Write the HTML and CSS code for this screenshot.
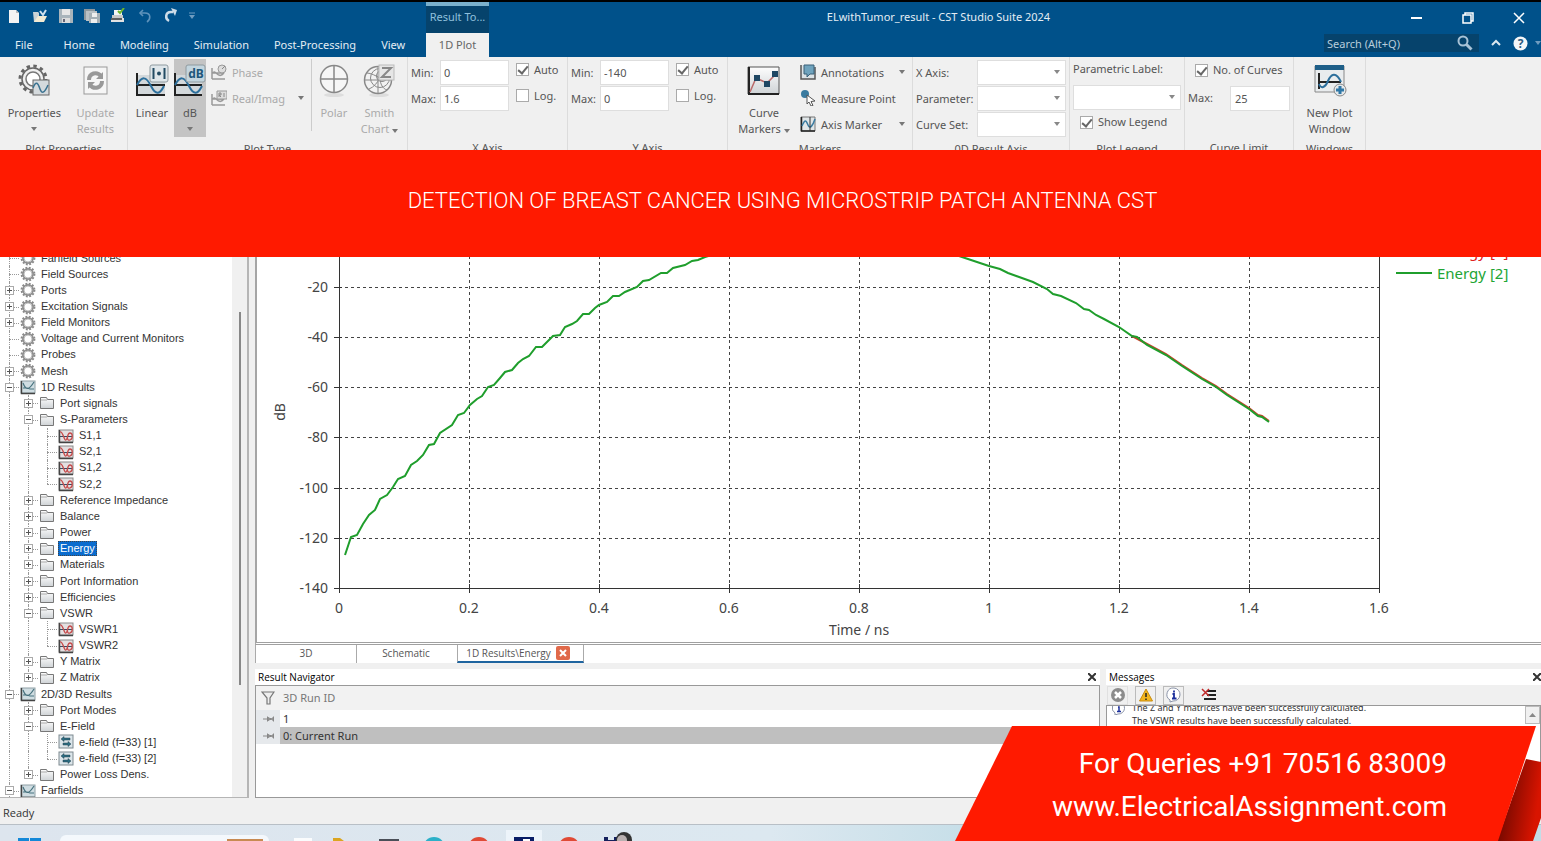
FILE: index.html
```html
<!DOCTYPE html>
<html lang="en">

<head>
  <meta charset="UTF-8">
  <meta name="viewport" content="width=device-width, initial-scale=1.0">
  <title>ELwithTumor_result - CST Studio Suite 2024</title>
  <link rel="stylesheet" href="styles.css">
</head>

<body>
  <!-- Shared icons -->
  <svg class="defs" width="0" height="0" aria-hidden="true">
    <linearGradient id="metal" x1="0" y1="0" x2="0" y2="1">
      <stop offset="0" stop-color="#fdfdfd"/>
      <stop offset="1" stop-color="#cfd3d6"/>
    </linearGradient>
    <symbol id="gear" viewBox="0 0 16 16">
      <circle cx="8" cy="8" r="6.4" fill="none" stroke="#8a8a8a" stroke-width="2" stroke-dasharray="1.9 1.45"/>
      <circle cx="8" cy="8" r="5" fill="#fff" stroke="#8f8f8f" stroke-width="2"/>
      <circle cx="8" cy="8" r="4" fill="#fff" stroke="#bdbdbd" stroke-width="1"/>
    </symbol>
    <symbol id="folder" viewBox="0 0 16 16">
      <path d="M1.500 13.500v-11h6l1 2h6v9z" fill="url(#metal)" stroke="#777"/>
      <path d="M2 5h6" stroke="#aaa"/>
    </symbol>
    <symbol id="graph" viewBox="0 0 16 16">
      <rect x="1" y="2" width="14" height="12" fill="#cfdde2" stroke="#8fa0a6"/>
      <path d="M1.500 2v12.500H15" fill="none" stroke="#444" stroke-width="1.400"/>
      <path d="M3 4c3 8 6 7 11-1M3 9h4l3 1h4" fill="none" stroke="#47727e" stroke-width="1.200"/>
    </symbol>
    <symbol id="curve" viewBox="0 0 16 16">
      <rect x="1" y="2" width="14" height="12" fill="#e3dfe0" stroke="#8b8b8b"/>
      <path d="M1.500 2v12.500H15" fill="none" stroke="#444" stroke-width="1.400"/>
      <path d="M2 8.500h12" stroke="#354b62"/>
      <path d="M2 4c3-1 4 9 6 8s1-7 4-7 3 6 0 7-3-3-2-5" fill="none" stroke="#c54b4b" stroke-width="1.300"/>
    </symbol>
    <symbol id="field" viewBox="0 0 16 16">
      <rect x="1" y="1" width="14" height="13" fill="#dbe5ea" stroke="#7e8a90"/>
      <path d="M3 5l3-2.500V4h6v2H6v1.500zM13 10l-3-2.500V9H5v2h5v1.500z" fill="#2c6d83" stroke="#24424e" stroke-width=".5"/>
    </symbol>
    <symbol id="pin" viewBox="0 0 12 8">
      <path d="M0 4h4M4.500 1.500v5M10.500 1.500v5M5 2.500l2 1h1.500l2-1v3l-2-1H7l-2 1z" fill="#999" stroke="#888"/>
    </symbol>
  </svg>

  <header class="titlebar">
    <div class="quick-access">
      <button type="button" title="New"><svg width="16" height="16"><path d="M3 2h7l3 3v10H3z" fill="#f3f3f3"/><path d="M10 2v3h3" fill="#bbb"/></svg></button>
      <button type="button" title="Open"><svg width="16" height="16"><path d="M1 4h5l1 1v9H2z" fill="#c9d2d6"/><path d="M2 14l4-6h9l-3 6z" fill="#f3ead2"/><path d="M8 3l3 4 3-5" fill="none" stroke="#cfe1ee" stroke-width="2"/></svg></button>
      <button type="button" title="Save"><svg width="16" height="16"><path d="M1 1h14v14H1z" fill="#a9b4bb"/><path d="M4 1h8v6H4z" fill="#e6e6e6"/><path d="M4 10h8v5H4z" fill="#dcdcdc"/><path d="M5 11h2v3H5z" fill="#667"/></svg></button>
      <button type="button" title="Save All"><svg width="16" height="16"><path d="M0 1h11v11H0z" fill="#8e989e"/><path d="M2 3h11v10H2z" fill="#b9c0c4"/><path d="M5 5h11v10H5z" fill="#a5afb5"/><path d="M8 5h5v4H8zM7 11h6v4H7z" fill="#eee"/></svg></button>
      <button type="button" title="Print"><svg width="16" height="16"><path d="M4 2h8v5H4z" fill="#f5f5f5"/><path d="M2 7h11v3H2z" fill="#c8c8c8"/><path d="M1 10h13v4H1z" fill="#e2e2e2"/><path d="M1 11h11" stroke="#333" stroke-width="1.500"/><path d="M8 3l2 2 4-5" fill="none" stroke="#6cb52d" stroke-width="2"/></svg></button>
      <button type="button" title="Undo"><svg width="16" height="16"><path d="M4 5h5c6 0 6 6 2 9" fill="none" stroke="#5f93bb" stroke-width="1.600"/><path d="M7 2L4 5l3 3" fill="none" stroke="#5f93bb" stroke-width="1.600"/></svg></button>
      <button type="button" title="Redo"><svg width="16" height="16"><path d="M11 4H9c-6 0-6 7-2 9" fill="none" stroke="#cddce8" stroke-width="2.500"/><path d="M9 0l6 2-2 6z" fill="#cddce8"/></svg></button>
      <button type="button" class="qa-more" title="Customize"><svg width="8" height="8"><path d="M1 1h6" stroke="#6f9cc0"/><path d="M1 3h6L4 7z" fill="#6f9cc0"/></svg></button>
    </div>
    <div class="context-title">Result To...</div>
    <div class="window-title">ELwithTumor_result - CST Studio Suite 2024</div>
    <div class="window-buttons">
      <button type="button" title="Minimize"><svg width="12" height="12"><path d="M0 6h11" stroke="#fff" stroke-width="2"/></svg></button>
      <button type="button" title="Restore"><svg width="12" height="12"><path d="M1 3h8v8H1zM3 3V1h8v8H9" fill="none" stroke="#fff" stroke-width="1.500"/></svg></button>
      <button type="button" title="Close"><svg width="12" height="12"><path d="M1 1l10 10M11 1L1 11" stroke="#fff" stroke-width="1.500"/></svg></button>
    </div>

    <nav class="tabs">
      <a class="file" href="#">File</a>
      <a href="#">Home</a>
      <a href="#">Modeling</a>
      <a href="#">Simulation</a>
      <a href="#">Post-Processing</a>
      <a href="#">View</a>
    </nav>
    <a class="tab-active" href="#">1D Plot</a>
    <div class="search-area">
      <div class="search">
        <input type="text" aria-label="Search" placeholder="Search (Alt+Q)">
        <svg width="16" height="16"><circle cx="6" cy="6" r="4.500" fill="none" stroke="#a8c2d6" stroke-width="2"/><path d="M9.500 9.500l5 5" stroke="#a8c2d6" stroke-width="3"/></svg>
      </div>
      <button type="button" title="Collapse ribbon"><svg width="10" height="8"><path d="M1 6l4-4 4 4" fill="none" stroke="#dbe7f0" stroke-width="2"/></svg></button>
      <button type="button" title="Help"><svg width="15" height="15"><circle cx="7.500" cy="7.500" r="7" fill="#f4f6f8"/><text x="7.500" y="12" class="help-mark">?</text></svg></button>
      <span class="caret"></span>
    </div>
  </header>

  <section class="ribbon">
    <div class="group g-properties">
      <div class="group-body">
        <button type="button" class="big">
          <svg width="34" height="34"><circle cx="16" cy="15" r="13" fill="none" stroke="#666" stroke-width="3" stroke-dasharray="3.400 3.400"/><circle cx="16" cy="15" r="11" fill="#f0f0f0" stroke="#666" stroke-width="1.500"/><circle cx="16" cy="15" r="7" fill="#fff" stroke="#777" stroke-width="1.500"/><rect x="16" y="16" width="16" height="15" fill="#d5dadd" stroke="#666"/><path d="M16 24c3-8 5-5 7 1s5 3 8-4" fill="none" stroke="#3b7391" stroke-width="1.500"/></svg>
          <span>Properties</span><span class="caret"></span>
        </button>
        <button type="button" class="big disabled">
          <svg width="34" height="34"><rect x="6" y="3" width="23" height="27" fill="#f6f6f6" stroke="#999"/><path d="M11 16c0-7 8-9 12-4M24 17c0 7-8 9-12 4" fill="none" stroke="#999" stroke-width="4"/><path d="M25 8v7h-7zM10 25v-7h7z" fill="#999"/></svg>
          <span>Update<br>Results</span>
        </button>
      </div>
      <div class="caption">Plot Properties</div>
    </div>

    <div class="group g-type">
      <div class="group-body">
        <button type="button" class="big">
          <svg width="34" height="34"><path d="M2 11h28v20H2z" fill="#d3d8db"/><path d="M2 9v23" stroke="#222" stroke-width="2"/><path d="M2 21h28M2 31h28" stroke="#222" stroke-width="2"/><path d="M2 21c5-9 9-9 14 1s9 8 13 0" fill="none" stroke="#2c6f9c" stroke-width="2"/><rect x="15" y="1" width="18" height="17" rx="2" fill="#dfe6ea" stroke="#8f9a9f"/><path d="M18.500 4v11M29.500 4v11" stroke="#234b63" stroke-width="2"/><circle cx="24" cy="9.500" r="2" fill="#234b63"/></svg>
          <span>Linear</span>
        </button>
        <button type="button" class="big pressed">
          <svg width="32" height="34"><path d="M1 11h27v20H1z" fill="#d3d8db"/><path d="M1 9v23" stroke="#222" stroke-width="2"/><path d="M1 21h27M1 31h27" stroke="#222" stroke-width="2"/><path d="M1 21c5-9 9-9 14 1s9 8 13 0" fill="none" stroke="#2c6f9c" stroke-width="2"/><rect x="12" y="1" width="19" height="17" rx="2" fill="#c3d5de" stroke="#8f9a9f"/><text x="22" y="14" class="db-mark">dB</text></svg>
          <span>dB</span><span class="caret"></span>
        </button>
        <div class="stack narrow">
          <button type="button" class="small disabled"><svg width="16" height="16"><path d="M1 4v11M1 9h12M1 15h13M2 9c3-4 5 7 11 0" fill="none" stroke="#999" stroke-width="1.500"/><circle cx="11" cy="5" r="4" fill="#ddd" stroke="#999"/><path d="M11 5l3-3" stroke="#888"/></svg>Phase</button>
          <button type="button" class="small disabled"><svg width="16" height="16"><path d="M1 4v11M1 9h12M1 15h13M2 9c3-4 5 7 11 0" fill="none" stroke="#999" stroke-width="1.500"/><path d="M6 1h10v8H6z" fill="#ddd" stroke="#999"/><path d="M8 7V3h2v2H8l2 2M13 3v4" fill="none" stroke="#888"/></svg>Real/Imag<span class="caret"></span></button>
        </div>
        <div class="separator"></div>
        <button type="button" class="big disabled">
          <svg width="34" height="34"><ellipse cx="17" cy="31" rx="10" ry="2" fill="#ddd"/><circle cx="17" cy="15" r="13.500" fill="#f6f6f6" stroke="#888" stroke-width="1.500"/><path d="M3 15h28M17 1v28" stroke="#888" stroke-width="1.500"/></svg>
          <span>Polar</span>
        </button>
        <button type="button" class="big disabled">
          <svg width="34" height="34"><ellipse cx="17" cy="31" rx="10" ry="2" fill="#ddd"/><circle cx="16" cy="16" r="13.500" fill="#f2f2f2" stroke="#888" stroke-width="1.500"/><circle cx="18" cy="14" r="9.500" fill="none" stroke="#888"/><circle cx="20" cy="12" r="5.500" fill="none" stroke="#888"/><path d="M3 16h26M16 3v26M18 14C14 12 9 9 5 9M18 14c-3 5-6 9-11 11M18 14c0 6 3 11 7 12" fill="none" stroke="#888"/><rect x="17" y="1" width="15" height="15" fill="#e6e6e6" stroke="#bbb"/><path d="M20 4h9l-9 9h9" fill="none" stroke="#888" stroke-width="2"/></svg>
          <span>Smith<br>Chart <i class="caret"></i></span>
        </button>
      </div>
      <div class="caption">Plot Type</div>
    </div>

    <div class="group g-axis">
      <div class="group-body fields">
        <label for="xMin">Min:</label><input type="text" id="xMin" value="0">
        <label class="check"><input type="checkbox" checked>Auto</label>
        <label for="xMax">Max:</label><input type="text" id="xMax" value="1.6">
        <label class="check"><input type="checkbox">Log.</label>
      </div>
      <div class="caption">X Axis</div>
    </div>

    <div class="group g-axis">
      <div class="group-body fields">
        <label for="yMin">Min:</label><input type="text" id="yMin" value="-140">
        <label class="check"><input type="checkbox" checked>Auto</label>
        <label for="yMax">Max:</label><input type="text" id="yMax" value="0">
        <label class="check"><input type="checkbox">Log.</label>
      </div>
      <div class="caption">Y Axis</div>
    </div>

    <div class="group g-markers">
      <div class="group-body">
        <button type="button" class="big">
          <svg width="34" height="34"><path d="M1 3h31v27H1z" fill="url(#metal)" stroke="#555"/><path d="M2 3v27h30" fill="none" stroke="#222" stroke-width="2"/><path d="M3 28l6-14 11 5 9-9" fill="none" stroke="#b96a6a" stroke-width="1.500"/><path d="M7 11h6v6H7zM17 17h6v6h-6zM25 7h6v6h-6z" fill="#1f4763"/></svg>
          <span>Curve<br>Markers <i class="caret"></i></span>
        </button>
        <div class="stack">
          <button type="button" class="small"><svg width="16" height="16"><path d="M1 1v14h14V3" fill="#dce3e6" stroke="#555" stroke-width="1.500"/><path d="M4 1h10v9H10l-3 3v-3H4z" fill="#6fa3bd" stroke="#3b6178"/></svg>Annotations<span class="caret"></span></button>
          <button type="button" class="small"><svg width="16" height="16"><circle cx="5" cy="4" r="4" fill="#3a7ba0"/><path d="M7 5l8 6-4 .5 2 4-2 .5-2-4-2 2z" fill="#fff" stroke="#555"/></svg>Measure Point</button>
          <button type="button" class="small"><svg width="16" height="16"><path d="M1 1h14v14H1z" fill="#e0e6e8" stroke="#777"/><path d="M1.500 1v14H15" fill="none" stroke="#222" stroke-width="1.500"/><path d="M2 10C5 3 6 4 8 9s5 0 7-6" fill="none" stroke="#3a7ba0" stroke-width="1.500"/><path d="M10 1v14" stroke="#333"/></svg>Axis Marker<span class="caret"></span></button>
        </div>
      </div>
      <div class="caption">Markers</div>
    </div>

    <div class="group g-result">
      <div class="group-body fields two">
        <label for="xAxis">X Axis:</label><span class="drop"><select id="xAxis"><option></option></select></span>
        <label for="parameter">Parameter:</label><span class="drop"><select id="parameter"><option></option></select></span>
        <label for="curveSet">Curve Set:</label><span class="drop"><select id="curveSet"><option></option></select></span>
      </div>
      <div class="caption">0D Result Axis</div>
    </div>

    <div class="group g-legend">
      <div class="group-body column">
        <label for="parametric">Parametric Label:</label>
        <span class="drop"><select id="parametric"><option></option></select></span>
        <label class="check"><input type="checkbox" checked>Show Legend</label>
      </div>
      <div class="caption">Plot Legend</div>
    </div>

    <div class="group g-limit">
      <div class="group-body column">
        <label class="check"><input type="checkbox" checked>No. of Curves</label>
        <div class="limit"><label for="limit">Max:</label><input type="text" id="limit" value="25"></div>
      </div>
      <div class="caption">Curve Limit</div>
    </div>

    <div class="group g-windows">
      <div class="group-body">
        <button type="button" class="big">
          <svg width="34" height="34"><path d="M2 2h29v26H2z" fill="#e9ecee" stroke="#888"/><path d="M2 1h29v5H2z" fill="#1f5f88"/><path d="M6 9v16M6 18h22" stroke="#222" stroke-width="2"/><path d="M6 20c2 5 6 4 9-3s8-10 13 1" fill="none" stroke="#2c6f9c" stroke-width="2"/><circle cx="27" cy="26" r="6" fill="#e5e8ea" stroke="#888"/><path d="M27 22v8M23 26h8" stroke="#2f77a6" stroke-width="3"/></svg>
          <span>New Plot<br>Window</span>
        </button>
      </div>
      <div class="caption">Windows</div>
    </div>
  </section>

  <main class="workspace">
    <aside class="navigation">
      <ul class="tree">
        <li><i class="guide h"></i><svg><use href="#gear"/></svg><span>Farfield Sources</span></li>
        <li><i class="guide h"></i><svg><use href="#gear"/></svg><span>Field Sources</span></li>
        <li><i class="guide h"><button class="twist plus" aria-label="Expand"></button></i><svg><use href="#gear"/></svg><span>Ports</span></li>
        <li><i class="guide h"><button class="twist plus" aria-label="Expand"></button></i><svg><use href="#gear"/></svg><span>Excitation Signals</span></li>
        <li><i class="guide h"><button class="twist plus" aria-label="Expand"></button></i><svg><use href="#gear"/></svg><span>Field Monitors</span></li>
        <li><i class="guide h"></i><svg><use href="#gear"/></svg><span>Voltage and Current Monitors</span></li>
        <li><i class="guide h"></i><svg><use href="#gear"/></svg><span>Probes</span></li>
        <li><i class="guide h"><button class="twist plus" aria-label="Expand"></button></i><svg><use href="#gear"/></svg><span>Mesh</span></li>
        <li><i class="guide h"><button class="twist" aria-label="Collapse"></button></i><svg><use href="#graph"/></svg><span>1D Results</span></li>
        <li><i class="guide"></i><i class="guide h"><button class="twist plus" aria-label="Expand"></button></i><svg><use href="#folder"/></svg><span>Port signals</span></li>
        <li><i class="guide"></i><i class="guide h"><button class="twist" aria-label="Collapse"></button></i><svg><use href="#folder"/></svg><span>S-Parameters</span></li>
        <li><i class="guide"></i><i class="guide"></i><i class="guide h"></i><svg><use href="#curve"/></svg><span>S1,1</span></li>
        <li><i class="guide"></i><i class="guide"></i><i class="guide h"></i><svg><use href="#curve"/></svg><span>S2,1</span></li>
        <li><i class="guide"></i><i class="guide"></i><i class="guide h"></i><svg><use href="#curve"/></svg><span>S1,2</span></li>
        <li><i class="guide"></i><i class="guide"></i><i class="guide h last"></i><svg><use href="#curve"/></svg><span>S2,2</span></li>
        <li><i class="guide"></i><i class="guide h"><button class="twist plus" aria-label="Expand"></button></i><svg><use href="#folder"/></svg><span>Reference Impedance</span></li>
        <li><i class="guide"></i><i class="guide h"><button class="twist plus" aria-label="Expand"></button></i><svg><use href="#folder"/></svg><span>Balance</span></li>
        <li><i class="guide"></i><i class="guide h"><button class="twist plus" aria-label="Expand"></button></i><svg><use href="#folder"/></svg><span>Power</span></li>
        <li class="selected"><i class="guide"></i><i class="guide h"><button class="twist plus" aria-label="Expand"></button></i><svg><use href="#folder"/></svg><span>Energy</span></li>
        <li><i class="guide"></i><i class="guide h"><button class="twist plus" aria-label="Expand"></button></i><svg><use href="#folder"/></svg><span>Materials</span></li>
        <li><i class="guide"></i><i class="guide h"><button class="twist plus" aria-label="Expand"></button></i><svg><use href="#folder"/></svg><span>Port Information</span></li>
        <li><i class="guide"></i><i class="guide h"><button class="twist plus" aria-label="Expand"></button></i><svg><use href="#folder"/></svg><span>Efficiencies</span></li>
        <li><i class="guide"></i><i class="guide h"><button class="twist" aria-label="Collapse"></button></i><svg><use href="#folder"/></svg><span>VSWR</span></li>
        <li><i class="guide"></i><i class="guide"></i><i class="guide h"></i><svg><use href="#curve"/></svg><span>VSWR1</span></li>
        <li><i class="guide"></i><i class="guide"></i><i class="guide h last"></i><svg><use href="#curve"/></svg><span>VSWR2</span></li>
        <li><i class="guide"></i><i class="guide h"><button class="twist plus" aria-label="Expand"></button></i><svg><use href="#folder"/></svg><span>Y Matrix</span></li>
        <li><i class="guide"></i><i class="guide h last"><button class="twist plus" aria-label="Expand"></button></i><svg><use href="#folder"/></svg><span>Z Matrix</span></li>
        <li><i class="guide h"><button class="twist" aria-label="Collapse"></button></i><svg><use href="#graph"/></svg><span>2D/3D Results</span></li>
        <li><i class="guide"></i><i class="guide h"><button class="twist plus" aria-label="Expand"></button></i><svg><use href="#folder"/></svg><span>Port Modes</span></li>
        <li><i class="guide"></i><i class="guide h"><button class="twist" aria-label="Collapse"></button></i><svg><use href="#folder"/></svg><span>E-Field</span></li>
        <li><i class="guide"></i><i class="guide"></i><i class="guide h"></i><svg><use href="#field"/></svg><span>e-field (f=33) [1]</span></li>
        <li><i class="guide"></i><i class="guide"></i><i class="guide h last"></i><svg><use href="#field"/></svg><span>e-field (f=33) [2]</span></li>
        <li><i class="guide"></i><i class="guide h last"><button class="twist plus" aria-label="Expand"></button></i><svg><use href="#folder"/></svg><span>Power Loss Dens.</span></li>
        <li><i class="guide h"><button class="twist" aria-label="Collapse"></button></i><svg><use href="#graph"/></svg><span>Farfields</span></li>
      </ul>
      <div class="scrollbar"><div class="thumb"></div></div>
    </aside>

    <div class="content">
      <div class="plot">
        <svg viewBox="0 0 1284 482">
          <g class="grid">
            <path d="M82 127H1122M82 177H1122M82 227H1122M82 277H1122M82 328H1122M82 378H1122"/>
            <path d="M212 0V428M342 0V428M472 0V428M602 0V428M732 0V428M862 0V428M992 0V428"/>
          </g>
          <path class="axis" d="M82 0V433M1122 0V433M77 428H1122M77 127h8M77 177h8M77 227h8M77 277h8M77 328h8M77 378h8M212 424v9M342 424v9M472 424v9M602 424v9M732 424v9M862 424v9M992 424v9"/>
          <polyline class="energy-1" points="875,176 890,184 909,194 925,205 945,218 959,226 970,234 992,248 1001,255 1005,256 1012,261"/>
          <polyline class="energy-2" points="88,395 94,377 100,375 106,364 112,355 118,350 123,339 130,335 136,327 141,319 148,316 154,305 160,301 166,295 172,285 177,284 183,273 195,265 201,255 207,253 213,245 220,239 225,236 231,227 237,225 243,218 248,212 255,210 261,203 266,199 272,196 279,187 285,187 296,176 303,175 308,167 315,164 320,161 326,154 332,154 338,148 342,145 350,142 356,136 362,136 368,132 380,127 386,121 392,120 404,113 410,113 416,108 428,105 435,101 441,100 448,97 520,76 600,70 660,82 702,96 732,106 743,109 751,113 776,122 790,129 796,134 804,136 819,143 827,149 832,150 839,155 847,159 862,167 875,176 880,177 890,185 909,195 925,206 945,219 959,227 970,235 992,249 1001,256 1005,257 1012,262"/>
          <g class="y-labels">
            <text x="71" y="132">-20</text>
            <text x="71" y="182">-40</text>
            <text x="71" y="232">-60</text>
            <text x="71" y="282">-80</text>
            <text x="71" y="333">-100</text>
            <text x="71" y="383">-120</text>
            <text x="71" y="433">-140</text>
          </g>
          <g class="x-labels">
            <text x="82" y="453">0</text>
            <text x="212" y="453">0.2</text>
            <text x="342" y="453">0.4</text>
            <text x="472" y="453">0.6</text>
            <text x="602" y="453">0.8</text>
            <text x="732" y="453">1</text>
            <text x="862" y="453">1.2</text>
            <text x="992" y="453">1.4</text>
            <text x="1122" y="453">1.6</text>
            <text x="602" y="475">Time / ns</text>
            <text transform="translate(28 252) rotate(-90)">dB</text>
          </g>
          <path class="energy-1" d="M1139 92h36"/>
          <path class="energy-2" d="M1139 113h36"/>
          <text class="legend-1" x="1180" y="97">Energy [1]</text>
          <text class="legend-2" x="1180" y="119">Energy [2]</text>
        </svg>
      </div>

      <nav class="view-tabs">
        <a href="#">3D</a>
        <a href="#">Schematic</a>
        <a href="#" class="active">1D Results\Energy<svg width="14" height="14"><rect width="14" height="14" rx="2" fill="#e0694a"/><path d="M4 4l6 6M10 4l-6 6" stroke="#fff" stroke-width="2"/></svg></a>
      </nav>

      <div class="docks">
        <section class="dock navigator">
          <h2>Result Navigator<button type="button" title="Close"><svg width="8" height="8"><path d="M0 0l8 8M8 0L0 8" stroke="#333" stroke-width="2"/></svg></button></h2>
          <div class="dock-body">
            <table>
              <tr>
                <th><svg width="14" height="14"><path d="M1 1h12L9 7v6H6V7z" fill="#eee" stroke="#777" stroke-width="1.200"/></svg></th>
                <th>3D Run ID</th>
              </tr>
              <tr>
                <td><svg width="12" height="8"><use href="#pin"/></svg></td>
                <td>1</td>
              </tr>
              <tr class="current">
                <td><svg width="12" height="8"><use href="#pin"/></svg></td>
                <td>0: Current Run</td>
              </tr>
            </table>
          </div>
        </section>

        <section class="dock messages">
          <h2>Messages<button type="button" title="Close"><svg width="8" height="8"><path d="M0 0l8 8M8 0L0 8" stroke="#333" stroke-width="2"/></svg></button></h2>
          <div class="toolbar">
            <button type="button" title="Errors"><svg width="16" height="16"><circle cx="8" cy="8" r="7" fill="#8c8c8c"/><path d="M5 5l6 6M11 5l-6 6" stroke="#fff" stroke-width="2.500"/></svg></button>
            <button type="button" class="on" title="Warnings"><svg width="16" height="16"><path d="M8 2l6.500 12h-13z" fill="#f2b51d" stroke="#c98d10"/><path d="M8 6v4M8 11.500v1.500" stroke="#222" stroke-width="1.500"/></svg></button>
            <button type="button" class="on" title="Infos"><svg width="16" height="16"><path d="M8 1a6.500 6.500 0 1 1-1 13l-3 1v-2A6.500 6.500 0 0 1 8 1z" fill="#fff" stroke="#8a93a8"/><path d="M6.500 7H8v4M6 11.500h4.500M8 3.500v2" fill="none" stroke="#1c2f9c" stroke-width="1.800"/></svg></button>
            <button type="button" class="clear" title="Clear"><svg width="16" height="16"><path d="M6 4h9M6 8h9M3 12h12" stroke="#222" stroke-width="2"/><path d="M1 2l7 7M8 2L1 9" stroke="#c02a2a" stroke-width="1.500"/></svg></button>
          </div>
          <div class="dock-body">
            <div class="message">
              <svg width="14" height="14"><path d="M7 1a6 6 0 1 1-1 12l-3 1v-2A6 6 0 0 1 7 1z" fill="#fff" stroke="#8a93a8"/><path d="M6 6h1v4M5 10.500h4M7 3v2" fill="none" stroke="#1c2f9c" stroke-width="1.500"/></svg>
              <p>The Z and Y matrices have been successfully calculated.<br>The VSWR results have been successfully calculated.</p>
            </div>
            <button type="button" class="scroll-up" title="Scroll up"><svg width="8" height="6"><path d="M0 5h7L3.500 1z" fill="#888"/></svg></button>
          </div>
        </section>
      </div>
    </div>
  </main>

  <footer class="status">Ready</footer>

  <div class="taskbar">
    <svg width="23" height="16"><path d="M0 1h11v15H0zM12 1h11v15H12z" fill="#1488d8"/></svg>
    <div class="task-search"><svg width="36" height="16"><path d="M0 2h36v14H0z" fill="#c88a52"/></svg></div>
    <svg width="13" height="16" overflow="visible"><path d="M0 1h18v15H0z" fill="#fafcfd"/></svg>
    <svg width="22" height="16"><path d="M1 1h7l4 3h2v12H1z" fill="#dba520"/></svg>
    <svg width="20" height="16"><path d="M0 2h20v14H0z" fill="#4a4f58"/></svg>
    <svg width="20" height="16"><circle cx="10" cy="11" r="11" fill="#2cb0c8"/></svg>
    <svg width="20" height="16"><circle cx="10" cy="11" r="11" fill="#e04a35"/></svg>
    <span class="task-active"><svg width="20" height="16"><path d="M0 0h20v16H0z" fill="#0a1d66"/><path d="M9 2h7v8H9z" fill="#fff"/></svg></span>
    <svg width="20" height="16"><circle cx="10" cy="11" r="11" fill="#e04a35"/></svg>
    <svg class="sphere" width="30" height="20"><path d="M0 5h4v3h6V5h3v15H0z" fill="#15205c"/><circle cx="20" cy="8" r="8" fill="#333"/><circle cx="18" cy="8" r="5" fill="#b9b0b0"/></svg>
  </div>

  <div class="banner">DETECTION OF BREAST CANCER USING MICROSTRIP PATCH ANTENNA CST</div>

  <div class="contact">
    <svg viewBox="0 0 586 115">
      <linearGradient id="fold" x1="0" y1="0" x2="1" y2=".3">
        <stop offset=".2" stop-color="#6d0800"/>
        <stop offset="1" stop-color="#d81400"/>
      </linearGradient>
      <path d="M571 33l15 3v56l-8 23h-36z" fill="url(#fold)"/>
      <path d="M57 0h524l-38 115H0z" fill="#ff1a00"/>
    </svg>
    <p>For Queries +91 70516 83009</p>
    <p>www.ElectricalAssignment.com</p>
  </div>
</body>

</html>
```
FILE: styles.css
```css
* {
  box-sizing: border-box;
}

body {
  display: flex;
  flex-direction: column;
  position: relative;
  height: 100vh;
  margin: 0;
  overflow: hidden;
  background-color: #f0f0f0;
  color: #555;
  font-family: "Noto Sans", "Open Sans", sans-serif;
  font-size: 11px;
}

button {
  padding: 0;
  border: none;
  background: none;
  color: inherit;
  font: inherit;
}

a {
  color: inherit;
  text-decoration: none;
}

svg {
  display: block;
  flex-shrink: 0;
}

.defs {
  position: absolute;
}

.caret {
  display: inline-block;
  width: 0;
  border: 3px solid transparent;
  border-top: 4px solid #777;
  border-bottom: none;
}

/* Title bar and tabs */
.titlebar {
  display: grid;
  grid-template-columns: 426px 63px 1fr auto;
  grid-template-rows: 31px 24px;
  border-top: 2px solid #000;
  background-color: #00518a;
  color: #e4edf4;
}

.quick-access {
  display: flex;
  align-items: center;
  gap: 10px;
  padding: 0 0 3px 6px;
}

.context-title {
  border-top: 4px solid #7ab0cc;
  background-color: #06436c;
  color: #8fc0dc;
  line-height: 22px;
  text-align: center;
}

.window-title {
  line-height: 30px;
  text-align: center;
}

.window-buttons {
  display: flex;
  align-items: center;
}

.window-buttons button {
  display: flex;
  justify-content: flex-end;
  width: 51px;
  padding-right: 16px;
}

.tabs {
  display: flex;
  gap: 25px;
  padding-left: 15px;
  line-height: 24px;
}

.tabs .file {
  margin-right: 6px;
}

.tab-active {
  background-color: #f0f0f0;
  color: #666;
  line-height: 24px;
  text-align: center;
}

.search-area {
  grid-column: 3 / 5;
  display: flex;
  align-items: center;
  justify-content: flex-end;
  gap: 12px;
  padding-bottom: 4px;
}

.search {
  display: flex;
  align-items: center;
  width: 155px;
  height: 18px;
  padding: 0 6px 0 3px;
  background-color: #06436c;
}

.search input {
  flex: 1;
  min-width: 0;
  padding: 0;
  border: none;
  background: none;
  color: #b8cddc;
  font: inherit;
}

.search input::placeholder {
  color: #b8cddc;
}

.search-area .caret {
  margin-left: -5px;
  border-top-color: #6f9cc0;
}

.help-mark {
  fill: #2b5b80;
  font-size: 12px;
  font-weight: bold;
  text-anchor: middle;
}

/* Ribbon */
.ribbon {
  display: flex;
  height: 103px;
  flex-shrink: 0;
  background-color: #f0f0f0;
}

.group {
  display: flex;
  flex-direction: column;
  border-right: 1px solid #dcdcdc;
}

.group-body {
  display: flex;
  height: 82px;
  padding-top: 2px;
}

.caption {
  line-height: 24px;
  text-align: center;
}

.g-properties {
  width: 128px;
}

.g-properties .group-body {
  padding-right: 5px;
}

.g-type {
  width: 280px;
}

.g-type .group-body {
  padding-left: 2px;
  padding-right: 4px;
}

.g-axis {
  width: 160px;
}

.g-markers {
  width: 185px;
}

.g-result {
  width: 157px;
}

.g-legend {
  width: 115px;
}

.g-limit {
  width: 109px;
}

.g-windows {
  width: 72px;
}

.big {
  display: flex;
  flex-direction: column;
  align-items: center;
  flex: 1 0 auto;
  padding-top: 5px;
  line-height: 16px;
  text-align: center;
}

.big svg {
  margin-bottom: 7px;
}

.big > .caret {
  margin-top: 6px;
}

.disabled {
  color: #aaa;
}

.pressed {
  flex: 0 0 32px;
  height: 78px;
  overflow: hidden;
  background-color: #c4c4c4;
}

.db-mark {
  fill: #20577a;
  font-size: 12px;
  font-weight: bold;
  text-anchor: middle;
}

.stack {
  display: flex;
  flex-direction: column;
  flex: none;
  width: 112px;
}

.stack.narrow {
  width: 105px;
  padding-left: 5px;
}

.small {
  display: flex;
  align-items: center;
  gap: 5px;
  height: 26px;
  padding-right: 7px;
}

.small .caret {
  margin-left: auto;
}

.separator {
  width: 1px;
  height: 72px;
  background-color: #ccc;
}

.fields {
  display: grid;
  grid-template-columns: 29px 69px 1fr;
  grid-auto-rows: 26px;
  align-items: center;
  padding-left: 3px;
}

.fields.two {
  grid-template-columns: 61px 1fr;
  padding-right: 3px;
}

.column {
  flex-direction: column;
  padding-left: 3px;
  padding-right: 3px;
}

.column > * {
  height: 26px;
  line-height: 20px;
}

.ribbon input[type="text"],
.ribbon select {
  width: 100%;
  height: 25px;
  padding: 0 3px;
  border: 1px solid #dedede;
  background-color: #fff;
  color: #555;
  font: inherit;
}

.ribbon select {
  appearance: none;
}

.drop {
  position: relative;
}

.drop::after {
  content: "";
  position: absolute;
  top: 10px;
  right: 6px;
  border: 3px solid transparent;
  border-top: 4px solid #888;
  border-bottom: none;
}

.check {
  display: flex;
  align-items: center;
  gap: 5px;
  height: 20px;
  padding-left: 7px;
}

.fields .check {
  align-self: start;
}

.column .check {
  height: 26px;
  padding-bottom: 4px;
}

.check input {
  display: flex;
  justify-content: center;
  width: 13px;
  height: 13px;
  margin: 0;
  appearance: none;
  border: 1px solid #aaa;
  background-color: #fff;
}

.check input:checked::before {
  content: "";
  width: 4px;
  height: 8px;
  border-right: 2px solid #666;
  border-bottom: 2px solid #666;
  transform: rotate(40deg);
}

.limit {
  display: grid;
  grid-template-columns: 42px 60px;
  align-items: center;
}

.limit input[type="text"] {
  padding-left: 4px;
}

/* Workspace */
.workspace {
  display: flex;
  flex: 1;
  gap: 6px;
  min-height: 0;
  padding-bottom: 4px;
}

.navigation {
  display: flex;
  width: 249px;
  padding-top: 90px;
  overflow: hidden;
  border-right: 2px solid #b5b5b5;
  border-bottom: 1px solid #b5b5b5;
  background-color: #fff;
}

.tree {
  display: grid;
  grid-auto-rows: 1fr;
  flex: 1;
  min-height: 0;
  margin: 0 0 -2px;
  padding: 0;
  list-style: none;
  color: #333;
  font-family: "Liberation Sans", Arial, sans-serif;
  font-size: 11px;
}

.tree li {
  display: flex;
  align-items: center;
  min-height: 0;
  white-space: nowrap;
}

.tree li > svg {
  width: 16px;
  height: 16px;
  margin: 0 3px 0 1px;
}

.tree li > span {
  padding: 0 2px;
  line-height: 15px;
}

.tree .selected > span {
  background-color: #0a6cce;
  color: #fff;
  outline: 1px dotted #444;
  outline-offset: -1px;
}

.guide {
  position: relative;
  display: flex;
  align-items: center;
  justify-content: center;
  align-self: stretch;
  width: 19px;
}

.guide::before {
  content: "";
  position: absolute;
  top: 0;
  bottom: 0;
  left: 9px;
  border-left: 1px dotted #999;
}

.guide.last::before {
  bottom: 50%;
}

.guide.h::after {
  content: "";
  position: absolute;
  top: 50%;
  left: 9px;
  right: 0;
  border-top: 1px dotted #999;
}

.twist {
  position: relative;
  z-index: 1;
  width: 9px;
  height: 9px;
  border: 1px solid #aaa;
  background: linear-gradient(#555, #555) center / 5px 1px no-repeat, #fff;
}

.twist.plus {
  background: linear-gradient(#555, #555) center / 5px 1px no-repeat, linear-gradient(#555, #555) center / 1px 5px no-repeat, #fff;
}

.scrollbar {
  width: 15px;
  padding: 62px 6px 0 7px;
  background-color: #f0f0f0;
}

.thumb {
  height: 77%;
  background-color: #888;
}

.content {
  display: flex;
  flex-direction: column;
  flex: 1;
  min-width: 0;
}

.plot {
  flex: 1;
  min-height: 0;
  border-left: 2px solid #a5a5a5;
  border-bottom: 3px double #a0a0a0;
  background-color: #fff;
}

.plot svg {
  width: 100%;
  height: 100%;
  fill: #444;
  font-size: 14px;
}

.grid {
  fill: none;
  stroke: #444;
  stroke-dasharray: 3 3;
  shape-rendering: crispEdges;
}

.axis {
  fill: none;
  stroke: #333;
  shape-rendering: crispEdges;
}

.energy-1 {
  fill: none;
  stroke: #c8402a;
  stroke-width: 2;
}

.energy-2 {
  fill: none;
  stroke: #1f9e2c;
  stroke-width: 2;
}

.y-labels {
  text-anchor: end;
}

.x-labels {
  text-anchor: middle;
}

.legend-1 {
  fill: #e02020;
  font-size: 15px;
}

.legend-2 {
  fill: #22a535;
  font-size: 15px;
}

.view-tabs {
  display: flex;
  height: 18px;
  background-color: #fff;
  font-family: "Open Sans", sans-serif;
  font-size: 10px;
  line-height: 16px;
}

.view-tabs a {
  width: 101px;
  border-left: 1px solid #aaa;
  text-align: center;
}

.view-tabs a:nth-child(2) {
  padding-right: 2px;
}

.view-tabs .active {
  display: flex;
  align-items: center;
  justify-content: center;
  gap: 5px;
  width: 127px;
  padding-right: 5px;
  border-right: 1px solid #aaa;
  border-bottom: 2px solid #1f65a0;
}

.docks {
  display: flex;
  gap: 6px;
  height: 135px;
  padding-top: 6px;
}

.dock {
  display: flex;
  flex-direction: column;
  background-color: #fff;
}

.navigator {
  flex: 845;
}

.messages {
  flex: 435;
}

.dock h2 {
  display: flex;
  align-items: center;
  justify-content: space-between;
  height: 16px;
  margin: 0;
  padding: 0 4px 0 3px;
  color: #000;
  font-family: "Open Sans", sans-serif;
  font-size: 10px;
  font-weight: normal;
}

.messages h2 {
  padding-right: 0;
}

.dock-body {
  display: flex;
  flex: 1;
  min-height: 0;
  overflow: hidden;
  border: 1px solid #999;
}

table {
  width: 100%;
  height: 58px;
  border-collapse: collapse;
  color: #333;
  font-size: 11px;
  line-height: 16px;
  text-align: left;
}

th {
  height: 24px;
  padding: 0 3px;
  background-color: #f2f2f2;
  color: #777;
  font-weight: normal;
}

td {
  height: 17px;
  padding: 0 3px;
}

th:first-child {
  width: 24px;
  padding-left: 5px;
}

td:first-child {
  width: 24px;
  padding-left: 7px;
  background-color: #e6e9ec;
}

.current td:last-child {
  background-color: #bfbfbf;
}

.toolbar {
  display: flex;
  align-items: center;
  gap: 7px;
  height: 20px;
  padding-left: 1px;
  background-color: #f0f0f0;
}

.toolbar button {
  display: flex;
  align-items: center;
  justify-content: center;
  width: 21px;
  height: 19px;
  border: 1px solid #e0e0e0;
}

.toolbar .on {
  border-color: #bbb;
}

.toolbar .clear {
  margin-left: 7px;
  border: none;
}

.message {
  display: flex;
  flex: 1;
  gap: 6px;
  margin-top: -5px;
  padding-left: 5px;
  color: #333;
  font-size: 9px;
}

.message p {
  margin: 0;
  line-height: 13px;
}

.scroll-up {
  display: flex;
  align-items: center;
  justify-content: center;
  width: 15px;
  height: 18px;
  border: 1px solid #bbb;
  background-color: #f0f0f0;
}

.status {
  height: 22px;
  padding-left: 3px;
  color: #333;
  font-family: "Open Sans", sans-serif;
  line-height: 22px;
}

.taskbar {
  display: flex;
  align-items: flex-end;
  gap: 25px;
  height: 17px;
  padding-left: 18px;
  overflow: hidden;
  border-top: 1px solid #b8bfc6;
  background: linear-gradient(90deg, #dde5ee, #dce8f0 50%, #c3dde7 65%);
}

.taskbar svg {
  margin-bottom: -12px;
}

.taskbar .sphere {
  margin-bottom: -11px;
}

.task-search {
  display: flex;
  justify-content: flex-end;
  align-items: flex-end;
  width: 209px;
  height: 6px;
  margin-left: -6px;
  padding-right: 6px;
  border-radius: 8px 8px 0 0;
  background-color: #f4f8fc;
}

.task-active {
  display: flex;
  align-items: flex-end;
  justify-content: center;
  width: 36px;
  height: 11px;
  margin: 0 -8px;
  background-color: #edf4fa;
}

/* Overlays */
.banner {
  position: absolute;
  top: 150px;
  left: 0;
  right: 0;
  height: 107px;
  padding-left: 24px;
  background-color: #ff1a00;
  color: #fff;
  font-family: Roboto, sans-serif;
  font-size: 22px;
  font-weight: 300;
  line-height: 101px;
  text-align: center;
}

.contact {
  position: absolute;
  right: 0;
  bottom: 0;
  width: 586px;
  height: 115px;
  padding: 16px 94px 0 0;
  color: #fff;
  font-family: Roboto, sans-serif;
  font-size: 28px;
  line-height: 43px;
  text-align: right;
}

.contact svg {
  position: absolute;
  top: 0;
  left: 0;
  width: 100%;
}

.contact p {
  position: relative;
  margin: 0;
}
```
